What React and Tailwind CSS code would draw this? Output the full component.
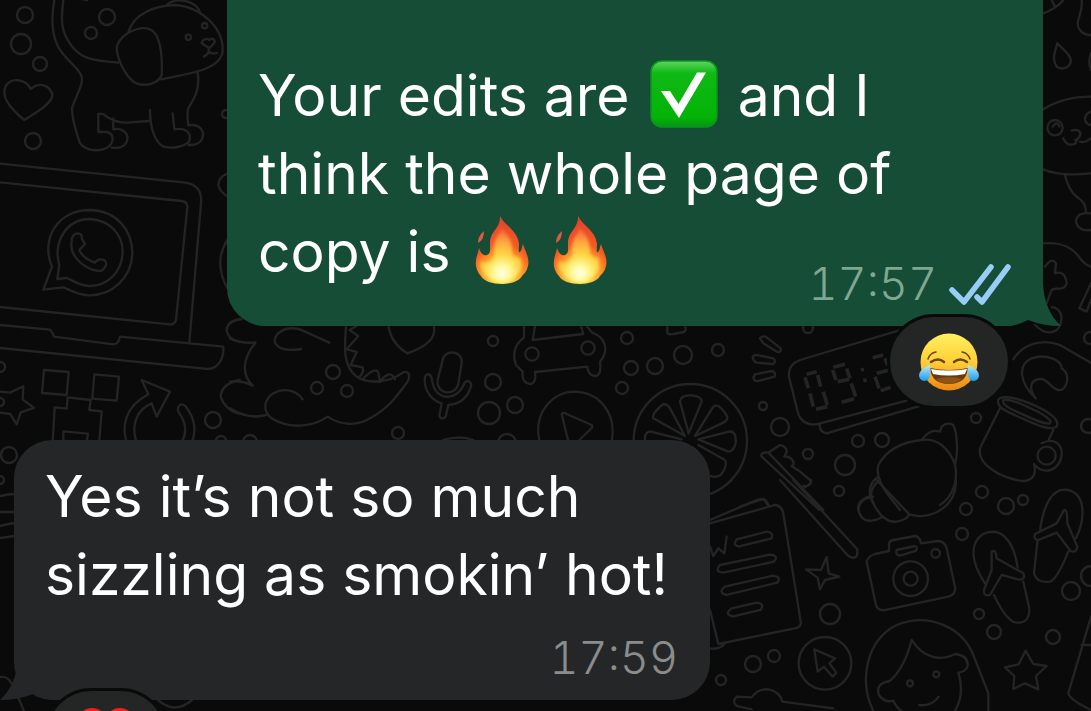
import React from "react";
import { clsx } from "clsx";

// Loose bubbles scattered between the doodles: [cx, cy, r]
const dots = [
  [25, 15, 8], [21, 44, 10], [40, 64, 7], [107, 17, 8], [91, 33, 6], [33, 141, 8],
  [0, 367, 5], [0, 402, 4], [9, 455, 8], [0, 480, 4], [213, 420, 8], [221, 441, 5],
  [333, 372, 7], [317, 388, 6], [347, 391, 6], [398, 433, 6], [250, 442, 7],
  [493, 341, 5], [493, 382, 8], [489, 413, 11], [515, 405, 8], [507, 443, 9],
  [627, 338, 6], [631, 368, 7], [655, 366, 8], [683, 355, 9], [718, 350, 6], [622, 388, 6],
  [808, 328, 5], [763, 406, 4], [780, 427, 9], [858, 441, 6], [882, 440, 7], [808, 454, 5],
  [845, 465, 10], [839, 491, 5], [976, 418, 5], [1088, 426, 7], [982, 492, 6], [966, 509, 6],
  [1006, 506, 8], [1023, 500, 5], [962, 534, 6], [830, 614, 10], [753, 664, 8], [774, 656, 6],
  [721, 680, 5], [979, 614, 5], [994, 632, 7], [1053, 637, 7], [1071, 591, 9], [1091, 576, 10],
  [226, 114, 4], [1090, 338, 6],
];

const Wallpaper = () => (
  <svg
    className="absolute inset-0 h-full w-full"
    viewBox="0 0 1091 711"
    preserveAspectRatio="xMidYMid slice"
    fill="none"
    stroke="#242424"
    strokeWidth="2.4"
    strokeLinecap="round"
    strokeLinejoin="round"
    aria-hidden="true"
  >
    {dots.map(([cx, cy, r]) => (
      <circle key={`${cx}-${cy}`} cx={cx} cy={cy} r={r} />
    ))}

    {/* Puppy and heart */}
    <g transform="scale(.3333)" strokeWidth="7">
      <path d="M163 0C152 60 158 105 172 135C190 175 228 195 243 225C255 250 225 290 216 325C216 365 232 405 240 430C260 455 300 455 322 443C345 425 342 400 320 396H295V342Q308 338 320 350Q350 368 380 368L447 363" />
      <path d="M190 0C182 60 185 90 203 120C235 175 270 182 355 188M340 355V388C365 382 390 400 380 425C372 443 350 445 335 443M450 330C450 385 465 425 490 440C520 447 550 440 566 427C577 400 560 382 523 388L518 340" />
      <path d="M593 218C602 275 575 305 565 325C560 340 563 360 565 376C600 370 615 395 607 415C600 432 585 436 566 435" />
      <path d="M385 98C400 40 470 15 530 15C600 22 672 80 668 155C660 205 590 218 483 238" />
      <path d="M500 15C530-10 590 0 602 42M247-2L262 0M385 98Q350 120 350 148C355 190 385 240 410 250C435 260 475 252 485 225C487 185 484 145 475 120C462 80 430 75 385 98Z" />
      <circle cx="565" cy="112" r="8" /><circle cx="614" cy="77" r="8" />
      <path d="M605 130C607 114 625 115 628 120C638 110 648 122 642 130L628 145ZM626 147V155C620 170 608 170 612 170M626 155C635 164 640 160 650 159" />
      <path d="M72 360C32 325 0 290 18 257C36 230 78 238 92 267C115 248 144 250 157 282C160 302 132 325 72 360Z" />
      <path d="M683 520Q655 532 655 555Q660 575 683 590" />
      {/* Laptop lid */}
      <path d="M0 491L550 547C590 550 607 575 603 610L568 1028M0 547L545 603Q563 606 562 622L528 960Q523 975 510 973L0 921" />
      <path d="M0 975L150 989L158 1000L162 1010L340 1033Q356 1033 360 1010L670 1040C673 1080 650 1108 620 1107L0 1044" />
    </g>

    {/* Messenger logo, blocks, reload arrow */}
    <g transform="translate(0 200) scale(.3333)" strokeWidth="7">
      <path d="M130 269L156 200C120 115 175 30 270 30C350 32 397 90 397 160C395 235 335 285 270 286C235 286 210 270 190 262Z" />
      <path d="M172 237L178 195C158 125 200 57 270 57C325 60 370 100 368 160C364 220 320 258 268 258C235 256 220 242 200 234Z" />
      <path d="M215 125Q215 100 235 100Q248 103 245 115L255 132L238 150Q248 175 285 188Q295 172 315 182Q325 195 305 212C270 218 205 175 215 125Z" />
      <path d="M132 510L206 516L200 585L126 579ZM283 523L357 530L350 602L277 596ZM203 592L272 600L268 630L305 634L298 725M203 592L200 626L164 622L158 725M190 725V694L264 701L260 725" />
      <path d="M0 575L30 578L70 559L68 598L102 624L62 637L50 673L30 642L0 638" />
      <path d="M385 740C360 680 375 620 445 583L425 540L510 575L470 650L455 610C405 630 390 685 415 740M535 740C565 705 560 670 535 635C530 617 545 607 556 618C590 660 590 700 570 740" />
      <path d="M682 120Q640 185 682 265M720 357Q680 365 680 392Q685 420 720 426M720 540Q665 550 662 590Q675 630 720 642" />
    </g>

    {/* Dinosaur and microphone */}
    <g transform="translate(230 310) scale(.3333)" strokeWidth="7">
      <path d="M0 38Q15 28 35 28M0 85Q35 102 77 97C30 155 40 200 68 227Q35 210 0 215M0 295Q55 330 110 315" />
      <path d="M298 98L210 58C160 45 130 75 135 98C145 122 180 122 213 117M218 268C195 235 155 235 130 250C100 270 98 305 125 325C180 360 250 350 293 320C330 345 380 350 420 325C475 295 500 260 533 215C545 190 530 180 515 190C480 215 420 225 380 200C335 165 345 100 348 48" />
      <path d="M380 48L358 60L385 78L350 118L380 126L362 165L398 172Q404 190 385 202M400 205Q435 170 445 187L450 216Q480 175 495 208M475 45C480 85 500 110 532 130C575 115 620 90 612 50" />
      <path d="M637 155C640 115 700 120 695 160L685 220C678 260 618 255 623 210ZM585 200C595 185 605 195 607 215C615 270 680 280 704 218C714 207 728 218 722 232C710 270 685 282 655 285L647 320Q635 332 628 318L635 280C600 270 580 235 585 200Z" />
      <path d="M640 390Q690 375 730 390" />
    </g>

    {/* Car, play button, citrus */}
    <g transform="translate(480 310) scale(.3333)" strokeWidth="7">
      <path d="M132 48V82Q90 115 108 165L128 185Q125 220 152 222Q170 218 165 186L322 170Q325 200 350 198Q365 192 360 155C390 120 375 80 335 67L320 48M165 48L158 90L310 72L303 48" />
      <circle cx="156" cy="132" r="20" /><circle cx="324" cy="114" r="20" />
      <path d="M178 390C160 305 220 245 286 245C360 248 408 310 396 390M264 390L245 312Q250 305 260 312L335 345Q340 352 332 357L298 390M562 48V70Q570 75 580 72L612 66Q620 60 615 48" />
      <circle cx="631" cy="392" r="170" />
      <path d="M626 370L600 275Q602 255 633 256Q665 258 665 275ZM615 378L520 325Q515 310 550 282Q562 282 570 295ZM645 378L700 290Q715 275 742 320Q743 332 730 338ZM655 388L750 364Q770 365 767 400Q760 425 745 425ZM605 388L510 364Q492 368 495 392M655 405L735 450Q745 465 722 495Q705 505 692 498" />
    </g>

    {/* Alarm clock, croissant, mug, toothbrush */}
    <g transform="translate(740 310) scale(.3333)" strokeWidth="7">
      <path d="M475 62L180 150Q140 165 148 205L173 305Q185 350 235 342L500 272M540 288L260 370Q235 365 240 340M60 85Q68 75 80 82L122 115Q124 128 112 126L70 100ZM38 140Q45 133 56 136L100 145Q110 153 100 162L50 158Q38 152 38 140ZM45 193L95 183Q108 185 104 200L55 213Q42 215 40 202Z" />
      <g strokeWidth="11" strokeLinecap="butt">
        <path d="M200 193L230 185M195 202L205 235M233 195L242 230M210 250L220 290M250 245L262 285M228 298L262 290M280 172L315 163M278 180L288 210M320 175L330 205M293 215L328 208M334 220L347 260M305 277L342 266M398 143L430 135M435 145L443 165M410 190L448 180M405 200L417 235M422 242L452 232M363 180L372 178M370 212L380 210" />
      </g>
      <path d="M820 148C850 100 910 85 960 105L1055 160M887 265C840 220 830 165 875 145C920 130 965 150 965 175C995 195 980 245 955 240C930 235 925 205 900 207C870 210 865 235 887 265Z" />
      <path d="M775 270C780 255 820 260 870 280C930 305 960 330 950 350C930 365 880 340 830 318C790 300 770 290 775 270ZM790 270C810 265 850 285 890 303C920 320 937 332 930 340C910 345 865 320 830 305C800 292 785 280 790 270ZM780 295L722 410C705 460 780 505 850 513C880 512 890 490 882 463M940 360L925 392" />
      <path d="M905 400C945 380 975 405 962 450C945 490 905 490 882 463" /><circle cx="920" cy="437" r="27" />
      <path d="M545 390Q570 355 600 365L605 350Q620 335 640 345C652 370 655 430 645 465Q635 430 605 405Q578 385 545 390Q450 400 415 465C405 510 440 550 480 600M645 465C655 510 640 560 600 585M410 503Q375 535 400 580M385 560Q350 575 355 600" />
      <path d="M238 600L65 440Q60 425 85 428L250 600M85 428L120 405Q140 410 140 425L133 440Q150 437 160 455Q163 465 155 468L180 485L210 510Q218 520 195 532M0 590L70 567L85 585" />
    </g>

    {/* Newspaper, camera, flip-flops, girl, star */}
    <g transform="translate(700 480) scale(.3333)" strokeWidth="7">
      <path d="M30 42Q65 30 95 0M30 120L170 60Q200 50 205 78M30 130L225 75Q245 77 250 100L303 430Q300 443 285 445L55 492L30 390M30 505Q60 510 75 490M30 200L40 228L55 205L73 220L80 170" />
      <path d="M110 178L200 155Q222 157 215 175L118 199Q96 198 110 178ZM60 255L210 224Q238 226 222 245L70 278Q42 276 60 255ZM75 320L218 287Q246 290 232 308L80 345Q52 338 75 320ZM95 385L170 368Q195 370 182 390L100 409Q70 404 95 385Z" />
      <path d="M240 0L445 228Q475 245 472 208L280 0M310 18Q335 20 333 0M318 268L363 270L380 231L386 280L418 290L375 300L360 328L353 293Z" />
      <path d="M540 0Q500 30 520 70Q550 130 590 125Q620 120 628 103L530 0M520 50Q480 55 475 85Q480 125 515 122Q535 120 548 110M628 103C700 125 775 70 767 0" />
      <path d="M500 245Q505 228 525 222L567 213V190Q570 182 580 180L645 168Q660 170 663 190L715 183Q735 185 740 205L766 325Q765 345 745 350L550 391Q532 390 528 375ZM590 210L645 198Q655 203 647 213L600 227Q585 225 590 210Z" />
      <circle cx="632" cy="296" r="52" /><circle cx="632" cy="296" r="21" /><circle cx="707" cy="220" r="13" />
      <path d="M855 310C815 250 805 190 850 162C900 140 940 175 953 262M875 215Q888 205 890 235L970 280Q978 295 960 300L905 285L870 345Q850 350 852 330L875 270ZM882 345Q920 425 950 428Q990 430 988 385L970 305M1020 155C1030 70 1060 20 1105 30C1160 45 1155 120 1128 175M1092 90Q1102 85 1102 130L1132 200Q1130 220 1112 213L1070 158L1015 180Q1000 180 1005 162L1070 130ZM1013 180L1002 280Q1010 310 1050 305Q1070 300 1105 215" />
      <circle cx="375" cy="550" r="79" />
      <path d="M343 508L405 535L388 550L409 578L398 590L372 560L353 575ZM520 693C475 600 500 480 590 435C690 395 790 445 822 530L865 640V693" />
      <path d="M635 480C620 540 595 580 570 603Q525 610 537 645Q555 670 580 662Q590 685 605 693M635 480C670 535 720 545 765 522Q805 525 803 558Q798 575 775 578Q795 640 765 693M658 675Q695 680 716 650" />
      <circle cx="630" cy="610" r="9" /><circle cx="709" cy="583" r="9" />
      <path d="M977 512L1000 552L1040 558L1008 588L1015 628L975 610L940 627L943 588L915 562L956 553ZM1173 410L1105 640Q1110 660 1173 690M1145 495H1173M155 688L110 678Q95 665 110 650L155 652Q175 625 205 628Q240 635 247 665L400 685" />
    </g>

    {/* Droplet and seal on the right edge */}
    <g transform="translate(1020 0) scale(.3333)" strokeWidth="7">
      <path d="M70 40Q110 25 130 0M95 0L105 20M185 0C190 45 160 65 180 90Q190 105 213 105M112 130C105 155 95 180 110 200C135 215 155 195 152 178C148 160 130 150 112 130ZM213 160Q203 185 213 210" />
      <path d="M70 328Q130 290 213 290M70 508Q120 530 213 520M135 525Q145 570 170 590Q202 610 197 640M213 640Q170 635 168 665Q175 695 213 690M70 730C130 725 160 745 180 775Q195 795 213 800" />
      <circle cx="105" cy="383" r="23" /><path d="M98 380Q112 360 118 380M213 335Q195 340 195 360Q200 375 213 375M130 415Q140 440 165 432L180 405M155 392Q175 385 182 400Q180 415 165 420M180 425Q195 430 213 415M75 800Q95 770 108 790L105 820Q135 810 140 850Q135 870 110 865L95 870L80 910M45 975Q80 1010 110 990Q130 970 122 940Q110 920 95 922M178 925L213 850M178 925L200 935L213 900" />
    </g>

    <path d="M0 496Q8 494 14 494M0 512H14M0 526Q8 524 14 523M0 538Q8 537 14 536M0 677Q8 676 11 683M18 697L24 711M158 700Q175 715 192 700" />
  </svg>
);

const CheckEmoji = () => (
  <svg role="img" aria-label="Check mark" viewBox="0 0 68 68" className="mx-1 inline-block h-[68px] w-[68px] align-[-12px]">
    <defs>
      <linearGradient id="check-fill" x1="0" y1="0" x2="0" y2="1">
        <stop offset="0" stopColor="#5fd65f" />
        <stop offset=".18" stopColor="#10b915" />
        <stop offset=".85" stopColor="#02b306" />
        <stop offset="1" stopColor="#079514" />
      </linearGradient>
    </defs>
    <rect x="1" y="1" width="66" height="66" rx="11" fill="url(#check-fill)" stroke="#0b9420" strokeWidth="1.5" />
    <path d="M11 31H20L28.500 44L47 12.500H56L29 58Z" fill="#fff" />
  </svg>
);

const FireEmoji = () => (
  <svg role="img" aria-label="Fire" viewBox="0 0 54 70" className="ml-2 inline-block h-[70px] w-[54px] align-[-13px]">
    <defs>
      <radialGradient id="fire-outer" cx="27" cy="59" r="56" gradientUnits="userSpaceOnUse">
        <stop offset="0" stopColor="#fff8bd" />
        <stop offset=".17" stopColor="#ffdf43" />
        <stop offset=".36" stopColor="#ff9d2c" />
        <stop offset=".55" stopColor="#f45a22" />
        <stop offset="1" stopColor="#e2412d" />
      </radialGradient>
      <radialGradient id="fire-inner" cx="27" cy="58" r="45" gradientUnits="userSpaceOnUse">
        <stop offset="0" stopColor="#fffff0" />
        <stop offset=".16" stopColor="#fffba0" />
        <stop offset=".4" stopColor="#ffd845" />
        <stop offset=".7" stopColor="#ffa43f" />
        <stop offset="1" stopColor="#fb7a45" stopOpacity=".5" />
      </radialGradient>
      <filter id="fire-soft" x="-20%" y="-20%" width="140%" height="140%">
        <feGaussianBlur stdDeviation="1.6" />
      </filter>
    </defs>
    <path d="M25 0C27 9 43 15 44 29C44 34 43 38 45 37C47 35 47 31 48 29C50 36 55 43 53 51C52 56 49 59 47 61C45 66 35 69 27 69C18 69 8 66 6 61C3 58 0 52 1 46C1 42 3 39 4 33C6 39 9 41 12 40C18 37 13 30 16 22C18 16 26 11 25 0Z" fill="url(#fire-outer)" />
    <path d="M26 13C34 20 38 28 37 39C40 42 42 43 45 42C46 49 48 52 43 58C40 64 34 67 27 67C19 67 13 64 10 59C6 55 5 51 6 46C11 49 14 48 17 44C22 41 17 34 20 27C21 21 26 19 26 13Z" fill="url(#fire-inner)" filter="url(#fire-soft)" />
    <path d="M9 16Q3 21 3 28Q9 25 9 16Z" fill="#df5943" />
  </svg>
);

const JoyEmoji = () => (
  <svg role="img" aria-label="Face with tears of joy" viewBox="0 0 62 58" className="h-[58px] w-[62px]">
    <defs>
      <linearGradient id="joy-face" x1="0" y1="0" x2="0" y2="1">
        <stop offset="0" stopColor="#fff05e" />
        <stop offset=".5" stopColor="#ffcf38" />
        <stop offset="1" stopColor="#ea8514" />
      </linearGradient>
      <linearGradient id="joy-tear" x1="0" y1="0" x2="0" y2="1">
        <stop offset="0" stopColor="#b8ecfc" />
        <stop offset="1" stopColor="#1d9be8" />
      </linearGradient>
    </defs>
    <circle cx="31" cy="29" r="28.500" fill="url(#joy-face)" />
    <path d="M12 35Q31 39 50 35C49 46 42 51 31 51C20 51 13 46 12 35Z" fill="#6d3b0b" />
    <path d="M13 36Q31 39 49 36L47 41Q31 44 15 41Z" fill="#fff" />
    <path d="M18 46Q31 42 44 46Q38 51 31 51Q23 51 18 46Z" fill="#8d5413" />
    <g fill="none" stroke="#6e430d" strokeLinecap="round">
      <path d="M13 29Q20 24 26 29M36 29Q42 24 49 29" strokeWidth="2.500" />
      <path d="M10 26Q12 20 18 19M44 19Q50 20 52 26" strokeWidth="1.500" />
    </g>
    <path d="M12 32Q1 36 1 43Q2 48 7 48Q14 47 12 32ZM50 32Q61 36 61 43Q60 48 55 48Q48 47 50 32Z" fill="url(#joy-tear)" />
  </svg>
);

const HeartEmoji = () => (
  <svg role="img" aria-label="Red heart" viewBox="0 0 58 56" className="h-14 w-[58px]">
    <path d="M29 55C14 43 1 30 1 15C1 6 7 0 15 0C21 0 26 3 29 9C32 3 37 0 43 0C51 0 57 6 57 15C57 30 44 43 29 55Z" fill="#f3201c" />
  </svg>
);

const ReadTicks = () => (
  <svg role="img" aria-label="Read" viewBox="0 0 62 42" className="h-[42px] w-[62px]" fill="none" stroke="#99cdf8" strokeWidth="5.5" strokeLinecap="round" strokeLinejoin="round">
    <path d="M3 27L15 39L42 4M28 34L33 39L59 4" />
  </svg>
);

const Message = ({ outgoing, time, children }) => (
  <article
    className={clsx(
      "relative pl-[31px] text-white",
      outgoing
        ? "mr-12 ml-[227px] rounded-b-[38px] bg-[#154d37] pt-[57px]"
        : "ml-3.5 w-[696px] max-w-full rounded-[38px] bg-[#242628] pt-[18px]"
    )}
  >
    <svg
      viewBox="0 0 56 60"
      className={clsx(
        "absolute bottom-0 h-[60px] w-14",
        outgoing ? "-right-[18px] fill-[#154d37]" : "-left-[14px] -scale-x-100 fill-[#242628]"
      )}
      aria-hidden="true"
    >
      <path d="M0 60V0H38V18C39 36 45 50 56 60Q38 60 23 54Q12 60 0 60Z" />
    </svg>
    <p className={clsx("relative text-[57px] leading-[78px]", outgoing ? "pr-20" : "pr-5")}>{children}</p>
    <div
      className={clsx(
        "relative flex items-center justify-end gap-3 pr-8 pb-[18px] text-[45px] leading-[48px] font-light tabular-nums",
        outgoing ? "-mt-[31px] text-[#7fa792]" : "mt-5 text-[#8b8d8d]"
      )}
    >
      <time dateTime={time}>{time}</time>
      {outgoing && <ReadTicks />}
    </div>
  </article>
);

const Reaction = ({ className, label, children }) => (
  <button
    aria-label={label}
    className={clsx(
      "relative -mt-3 flex h-[95px] w-[124px] shrink-0 items-center justify-center rounded-full border-3 border-[#090a0a] bg-[#242625]",
      className
    )}
  >
    {children}
  </button>
);

const App = () => {
  return (
    <main className="relative h-screen overflow-hidden bg-[#0a0a0a] font-['Inter','Liberation_Sans',sans-serif]">
      <Wallpaper />
      <section className="relative flex flex-col" aria-label="Conversation">
        <Message outgoing time="17:57">
          Your edits are <CheckEmoji /> and I think the whole page of copy is <FireEmoji /> <FireEmoji />
        </Message>
        <Reaction className="mr-20 self-end" label="Laughing reaction">
          <JoyEmoji />
        </Reaction>

        <div className="mt-[31px] flex flex-col">
          <Message time="17:59">Yes it’s not so much sizzling as smokin’ hot!</Message>
          <Reaction className="ml-11" label="Heart reaction">
            <HeartEmoji />
          </Reaction>
        </div>
      </section>
    </main>
  );
};

export default App;
